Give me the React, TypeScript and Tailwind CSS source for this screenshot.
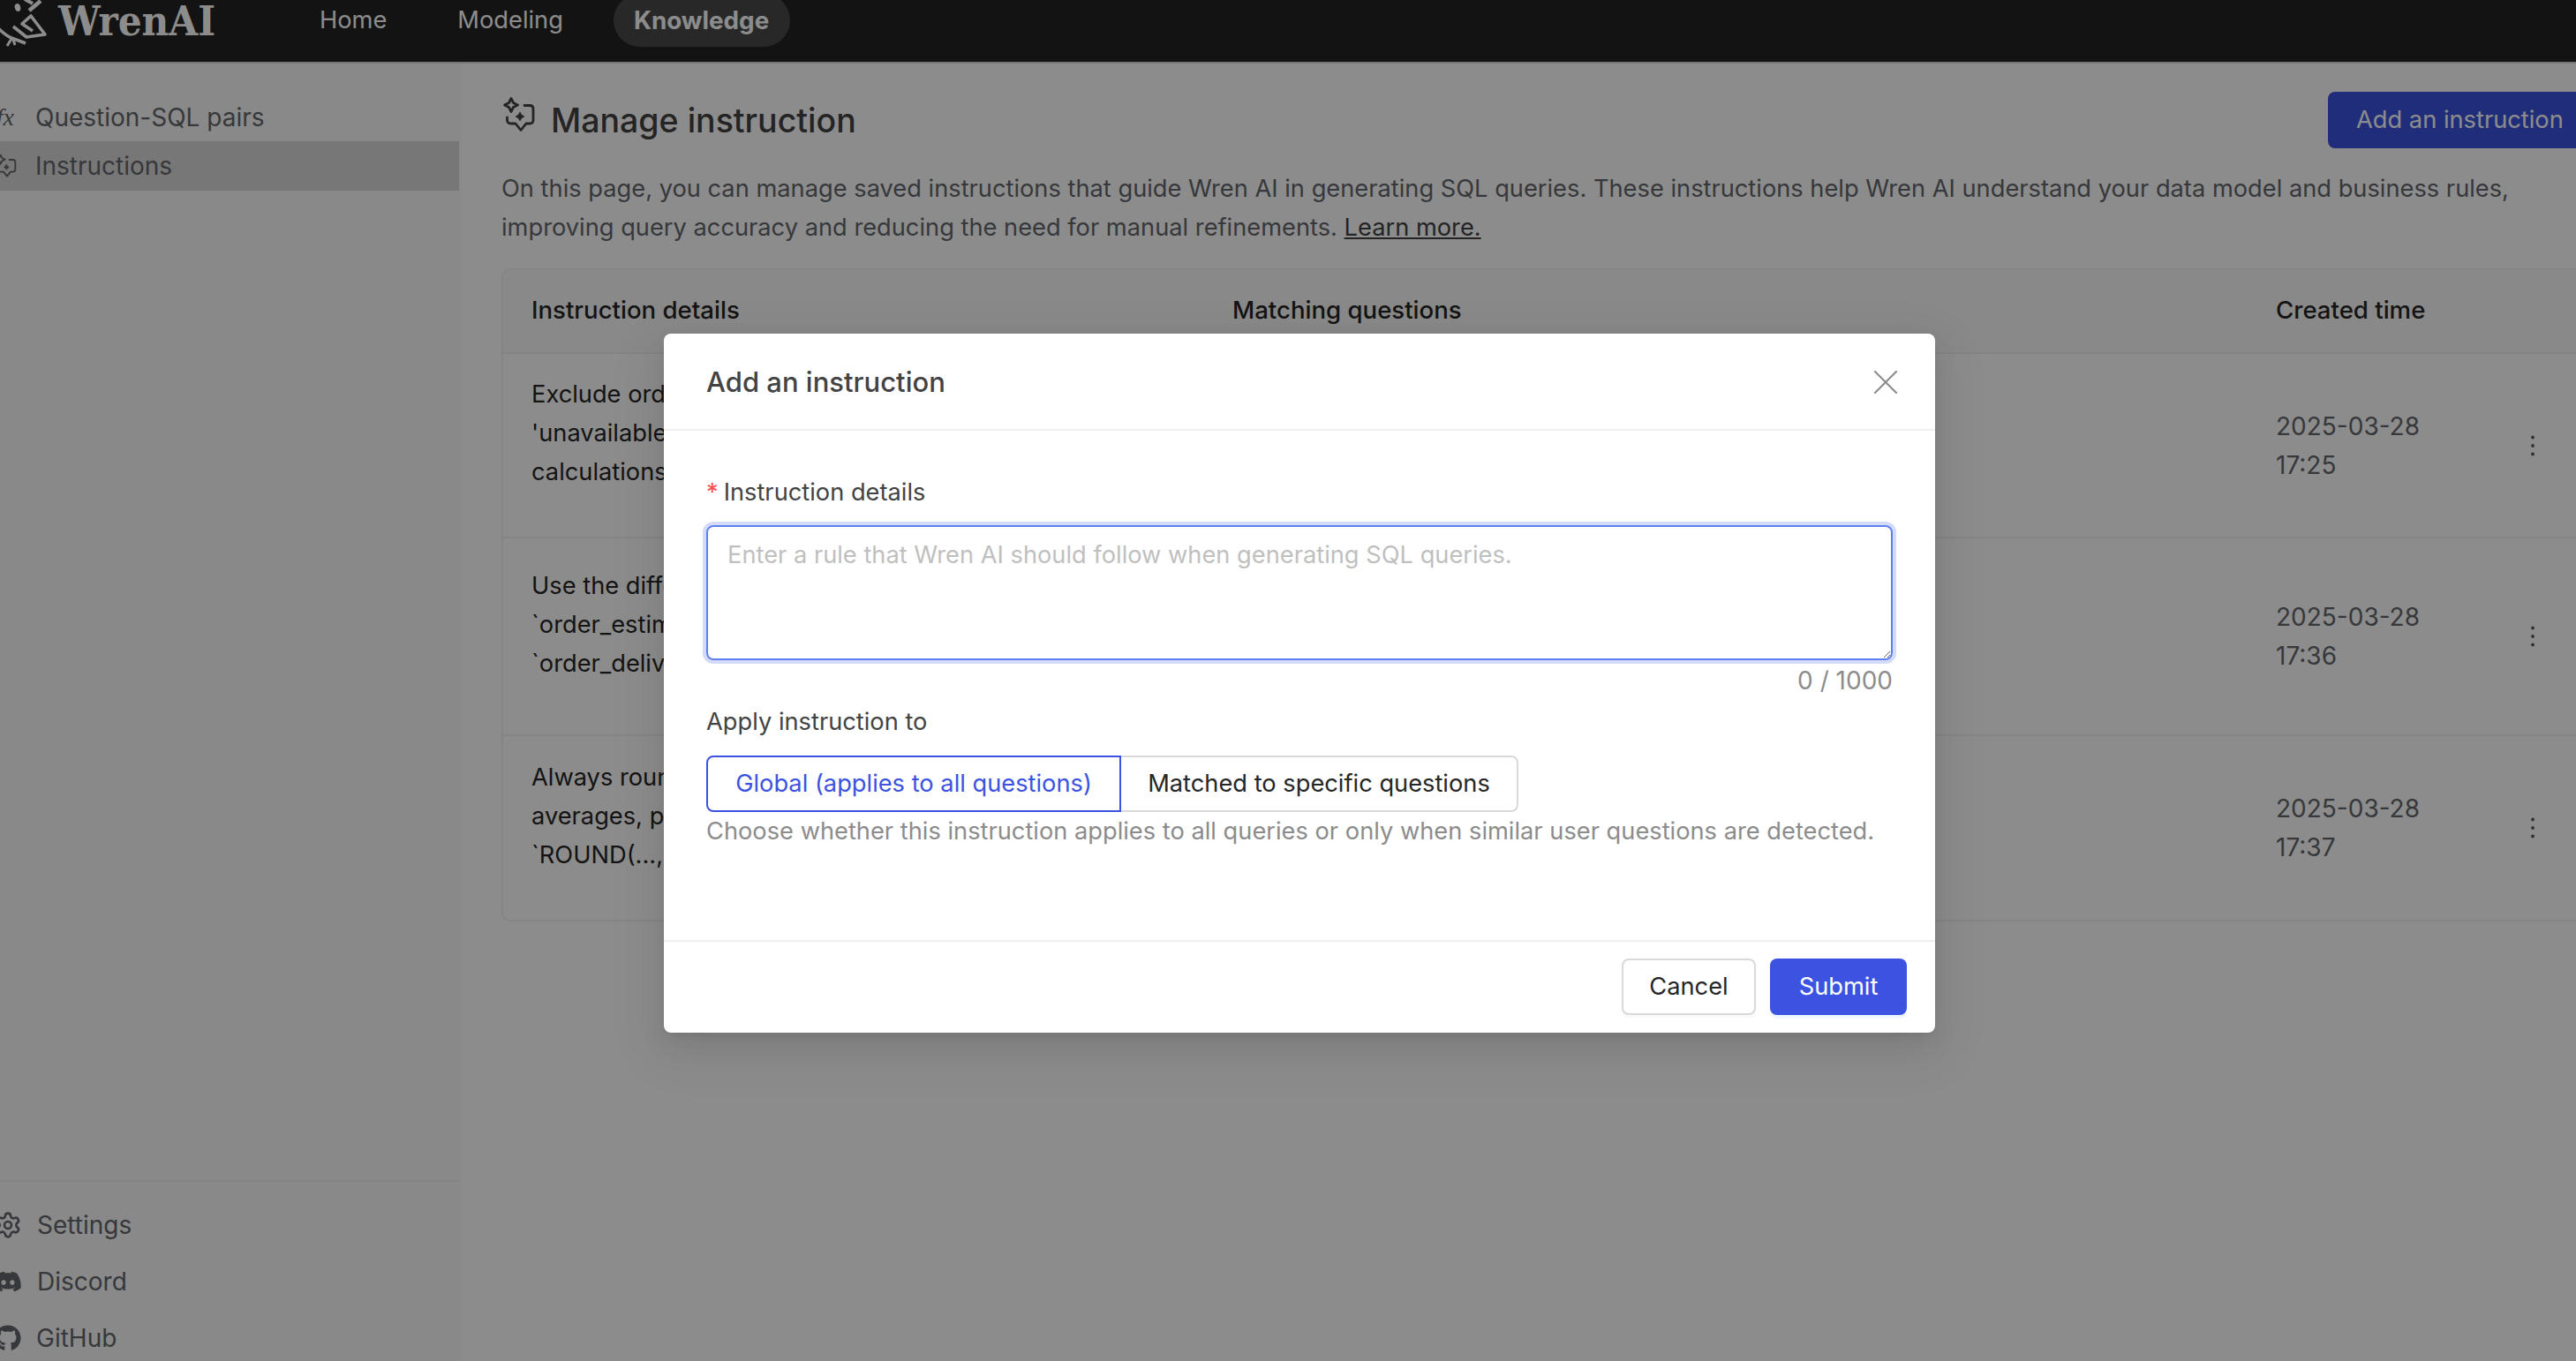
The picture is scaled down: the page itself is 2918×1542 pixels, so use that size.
import React from 'react';
import { Settings, X } from 'lucide-react';
import { FaDiscord, FaGithub } from 'react-icons/fa';

const ROWS = [
  {
    lines: ["Exclude orders with status 'canceled' or", "'unavailable' from all revenue", 'calculations.'],
    date: '17:25',
    height: 'h-[209px]',
  },
  {
    lines: ['Use the difference between', '`order_estimated_delivery_date` and', '`order_delivered_customer_date`.'],
    date: '17:36',
    height: 'h-[224px]',
  },
  {
    lines: ['Always round monetary values, sums and', 'averages, percentages to two decimals with', '`ROUND(..., 2)`.'],
    date: '17:37',
    height: 'h-[208px]',
  },
];

const InstructionIcon = ({ className }: { className?: string }) => (
  <svg viewBox="9 4 38 42" fill="none" stroke="currentColor" strokeWidth="2.8" strokeLinejoin="round" strokeLinecap="round" className={className}>
    <path d="M20 6.5 L22.5 11.5 L27.5 14 L22.5 16.5 L20 21.5 L17.5 16.5 L12.5 14 L17.5 11.5 Z" />
    <path d="M35 14.5 H41 Q45 14.5 45 18.5 V31 Q45 35 41 35 H37 L31 42.5 L25 35 H20 Q15.5 35 15.5 31 V28" />
    <path d="M30 22.5 L31.6 25.4 L34.5 27 L31.6 28.6 L30 31.5 L28.4 28.6 L25.5 27 L28.4 25.4 Z" fill="currentColor" strokeWidth="1.2" />
  </svg>
);

const WrenLogo = () => (
  <svg viewBox="0 0 66 60" fill="none" stroke="currentColor" strokeWidth="3.6" strokeLinejoin="round" className="mt-[24px] h-[60px] w-[66px] shrink-0 self-start">
    <path d="M46 1 L33 12" strokeWidth="4.5" />
    <path d="M28 -1 L37 4" strokeWidth="4" />
    <ellipse cx="20" cy="8.5" rx="3.2" ry="4.4" fill="currentColor" stroke="none" transform="rotate(-15 20 8.5)" />
    <path d="M15 30 L30 42 L51 39 L35 18 L25 27 L37 35" />
    <path d="M-4 30 C2 36 6 40 13 43 L29 49" />
    <path d="M13 44 L8 52 M15 45 L17 51" strokeWidth="3" />
  </svg>
);

export default function App() {
  return (
    <div className="relative flex h-[1542px] w-[2918px] flex-col overflow-hidden bg-white font-['Inter',sans-serif] text-[27.25px] leading-[44px]">
      <header className="-mt-[24px] flex h-[96px] shrink-0 items-center border-b-2 border-[#d9d9d9] bg-[#242424] text-white">
        <WrenLogo />
        <span className="w-[296px] font-['DejaVu_Serif_Condensed','DejaVu_Serif',serif] text-[47px] font-bold leading-none">WrenAI</span>
        <nav className="flex items-center">
          <a className="mr-[80px] text-[#ffffff]">Home</a>
          <a className="mr-[57px] text-[#ffffff]">Modeling</a>
          <a className="flex h-[60px] items-center rounded-full bg-[#4a4a4a] pl-[23px] pr-[24px] text-[27.8px] font-bold text-[#ffffff]">Knowledge</a>
        </nav>
      </header>

      <div className="flex min-h-0 flex-1">
        <aside className="flex w-[522px] shrink-0 flex-col border-r-2 border-[#fafafa] bg-[#fafafa] pt-[33px] text-[28px] text-[#65676c]">
          <div className="flex h-[55px] items-center">
            <span className="-ml-[16px] w-[32px] text-right font-['Liberation_Serif',serif] text-[28px] italic">fx</span>
            <span className="ml-[24px]">Question-SQL pairs</span>
          </div>
          <div className="flex h-[56px] items-center bg-[#d9d9d9]">
            <InstructionIcon className="-ml-[7px] h-[28px] w-[26px] shrink-0" />
            <span className="ml-[21px]">Instructions</span>
          </div>

          <div className="-mb-[6px] mt-auto border-t-2 border-[#f0f0f0] pt-[17px]">
            <div className="flex h-[64px] items-center">
              <Settings size={32} strokeWidth={2} className="-ml-[7px] shrink-0" />
              <span className="ml-[17px]">Settings</span>
            </div>
            <div className="flex h-[64px] items-center">
              <FaDiscord size={32} className="-ml-[7px] shrink-0" />
              <span className="ml-[17px]">Discord</span>
            </div>
            <div className="flex h-[64px] items-center">
              <FaGithub size={30} className="-ml-[6px] shrink-0" />
              <span className="ml-[17px]">GitHub</span>
            </div>
          </div>
        </aside>

        <main className="w-[2500px] shrink-0 pl-[46px] pt-[32px]">
          <div className="flex h-[66px] w-[2400px] items-start justify-between">
            <h1 className="flex items-start pt-[5px] text-[37.5px] font-medium leading-[48px] text-[#434343]">
              <InstructionIcon className="mr-[18px] h-[42px] w-[38px] shrink-0 text-[#434343]" />
              <span className="mt-[4px]">Manage instruction</span>
            </h1>
            <button className="flex h-[64px] w-[331px] items-center rounded-[8px] bg-[#3b53e0] pl-[32px] text-white">
              Add an instruction
            </button>
          </div>
          <p className="mt-[22px] w-[2350px] text-[#65676c]">
            On this page, you can manage saved instructions that guide Wren AI in generating SQL queries. These instructions help Wren AI understand your data model and business rules,
            <br />
            improving query accuracy and reducing the need for manual refinements. <a className="text-[#434343] underline">Learn more.</a>
          </p>

          <div className="mt-[24px] w-[2400px] overflow-hidden rounded-[10px] border-2 border-[#f0f0f0]">
            <div className="flex h-[95px] items-center border-b-2 border-[#f0f0f0] bg-[#fafafa] pb-[3px] pl-[32px] text-[27.6px] font-medium text-[#262626]">
              <span className="w-[794px]">Instruction details</span>
              <span className="w-[1182px]">Matching questions</span>
              <span>Created time</span>
            </div>
            {ROWS.map((row, i) => (
              <div key={row.date} className={`flex items-center pl-[32px] ${row.height} ${i < 2 ? 'border-b-2 border-[#f0f0f0]' : ''}`}>
                <div className="w-[794px] whitespace-nowrap pb-[27px] text-[#262626]">
                  {row.lines.map((line) => (
                    <div key={line}>{line}</div>
                  ))}
                </div>
                <div className="w-[1182px]" />
                <div className="w-[287px] text-[28px] text-[#65676c]">
                  2025-03-28
                  <br />
                  {row.date}
                </div>
                <svg viewBox="0 0 8 24" className="h-[24px] w-[8px] text-[#595959]" fill="currentColor">
                  <circle cx="4" cy="2.5" r="1.9" />
                  <circle cx="4" cy="12" r="1.9" />
                  <circle cx="4" cy="21.5" r="1.9" />
                </svg>
              </div>
            ))}
          </div>
        </main>
      </div>

      <div className="absolute inset-0 bg-black/45 pl-[752px] pt-[378px]">
        <div className="flex h-[792px] w-[1440px] flex-col rounded-[8px] bg-white shadow-[0_12px_30px_rgba(0,0,0,0.08),0_6px_12px_-8px_rgba(0,0,0,0.12),0_18px_56px_16px_rgba(0,0,0,0.05)]">
          <div className="flex h-[110px] shrink-0 items-center justify-between border-b-2 border-[#f0f0f0] pl-[48px] pr-[32px] pt-[2px]">
            <span className="text-[31px] font-medium text-[#434343]">Add an instruction</span>
            <X size={48} strokeWidth={1.1} className="text-[#8c8c8c]" />
          </div>

          <div className="flex-1 px-[48px] pt-[48px]">
            <label className="flex h-[44px] items-center text-[#434343]">
              <span className="mr-[6px] text-[#ff4d4f]">*</span>
              Instruction details
            </label>
            <textarea
              readOnly
              placeholder="Enter a rule that Wren AI should follow when generating SQL queries."
              className="mt-[15px] block h-[153px] w-[1344px] rounded-[8px] border-2 border-[#5f7ef2] px-[22px] pb-[8px] pt-[10px] text-[#434343] outline-none ring-[4px] ring-[#d4dbf8] placeholder:text-[#bfbfbf]"
            />
            <div className="pt-[1px] text-right text-[28px] text-[#8c8c8c]">0 / 1000</div>
            <div className="mt-[3px] flex h-[44px] items-center text-[#434343]">Apply instruction to</div>
            <div className="mt-[16px] flex h-[64px]">
              <div className="flex w-[470px] items-center justify-center rounded-l-[8px] border-2 border-[#3b53e0] text-[#3b53e0]">
                Global (applies to all questions)
              </div>
              <div className="flex w-[450px] items-center justify-center rounded-r-[8px] border-2 border-l-0 border-[#d9d9d9] text-[#262626]">
                Matched to specific questions
              </div>
            </div>
            <div className="text-[#8c8c8c]">Choose whether this instruction applies to all queries or only when similar user questions are detected.</div>
          </div>

          <div className="flex h-[105px] shrink-0 items-start justify-end gap-[16px] border-t-2 border-[#f0f0f0] pr-[32px] pt-[19px]">
            <button className="h-[64px] w-[152px] rounded-[8px] border-2 border-[#d9d9d9] bg-white text-[#262626] shadow-[0_4px_0_rgba(0,0,0,0.02)]">Cancel</button>
            <button className="h-[64px] w-[155px] rounded-[8px] bg-[#3b53e0] text-white shadow-[0_4px_0_rgba(5,95,255,0.06)]">Submit</button>
          </div>
        </div>
      </div>
    </div>
  );
}
